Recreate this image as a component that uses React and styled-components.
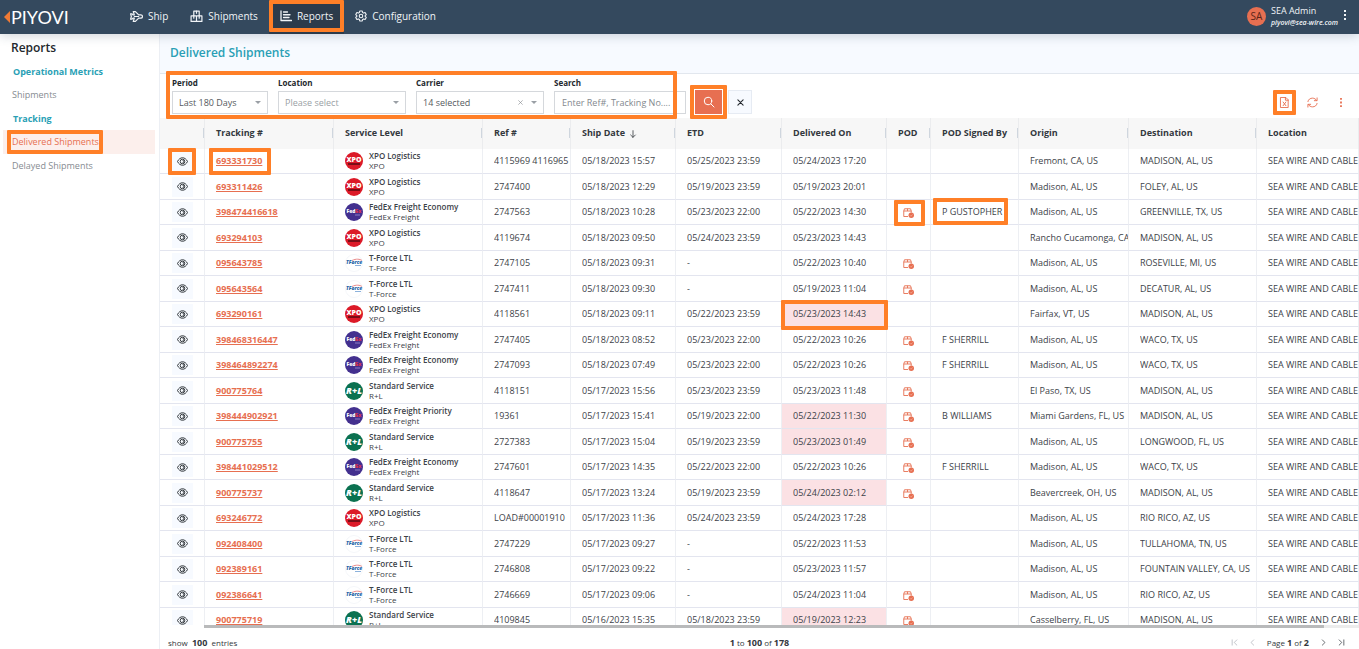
import React from "react";
import styled, { createGlobalStyle } from "styled-components";

const accent = "#e76f51";
const mark = "#ff7f27";
const teal = "#2a9fb5";

const Global = createGlobalStyle`
  * { box-sizing: border-box; }
  html, body, #root { height: 100%; }
  body {
    margin: 0;
    font-family: "Open Sans", "Noto Sans", sans-serif;
    font-size: 9px;
    color: #3c4248;
    background: #fff;
    overflow: hidden;
  }
  button, input, select { font: inherit; color: inherit; }
  button { border: 0; background: none; padding: 0; cursor: pointer; }
  a { color: inherit; text-decoration: none; }
  h1, h2, h3, p { margin: 0; }
`;

const Page = styled.div`
  height: 100vh;
  display: flex;
  flex-direction: column;
`;

/* Rectangle drawn over the part being pointed out */
const Mark = styled.span`
  position: absolute;
  z-index: 5;
  top: ${(p) => p.$t}px;
  right: ${(p) => p.$r}px;
  bottom: ${(p) => p.$b}px;
  left: ${(p) => p.$l}px;
  border: 4px solid ${mark};
  border-radius: 1px;
  pointer-events: none;
`;

const Header = styled.header`
  position: relative;
  z-index: 2;
  flex: none;
  height: 34px;
  display: flex;
  align-items: center;
  background: #34495e;
  color: #f1f4f7;
  box-shadow: 0 2px 10px rgba(52, 73, 94, 0.22);
`;

const Brand = styled.a`
  width: 119px;
  padding-left: 4px;
  display: flex;
  align-items: center;
  svg { display: block; }
`;

const BrandName = styled.span`
  font-family: Lato, sans-serif;
  font-size: 18px;
  line-height: 20px;
  color: #fff;
`;

const Nav = styled.nav`
  flex: 1;
  display: flex;
  height: 100%;
`;

const NavLink = styled.a`
  position: relative;
  display: flex;
  align-items: center;
  gap: 5px;
  padding: 0 11px 2px;
  font-size: 10px;
  background: ${(p) => (p.$active ? "#2c3b4b" : "transparent")};
  svg { flex: none; }
`;

const User = styled.div`
  display: flex;
  align-items: center;
  gap: 5px;
  padding: 0 12px 2px 0;
`;

const Avatar = styled.span`
  width: 19px;
  height: 19px;
  border-radius: 50%;
  display: grid;
  place-items: center;
  background: ${accent};
  color: #5a2418;
  font-size: 10px;
`;

const UserName = styled.span`
  display: block;
  font-size: 9px;
  line-height: 12px;
`;

const UserMail = styled.span`
  display: block;
  font-size: 7px;
  line-height: 11px;
  font-style: italic;
  font-weight: 600;
`;

const Body = styled.div`
  flex: 1;
  min-height: 0;
  display: flex;
`;

const Sidebar = styled.aside`
  width: 160px;
  flex: none;
  padding: 6px 4px 0 3px;
  border-right: 1px solid #eceff4;
`;

const SideTitle = styled.h1`
  font-size: 12px;
  line-height: 16px;
  font-weight: 600;
  color: #23282d;
  padding-left: 8px;
  margin-bottom: 4px;
`;

const SideHead = styled.h2`
  font-size: 9px;
  line-height: 23px;
  font-weight: 700;
  color: ${teal};
  padding-left: 10px;
`;

const SideLink = styled.a`
  position: relative;
  display: block;
  font-size: 9px;
  line-height: 24px;
  padding-left: 9px;
  color: ${(p) => (p.$active ? accent : "#868b91")};
  background: ${(p) => (p.$active ? "#fcefec" : "transparent")};
`;

const Main = styled.main`
  flex: 1;
  min-width: 0;
  display: flex;
  flex-direction: column;
`;

const TitleBar = styled.div`
  flex: none;
  height: 40px;
  padding: 8px 10px;
  background: #f7faff;
  border-bottom: 1px solid #e2e7ee;
`;

const Title = styled.h2`
  font-size: 12px;
  line-height: 22px;
  font-weight: 600;
  color: ${teal};
`;

const Toolbar = styled.div`
  flex: none;
  height: 44px;
  display: flex;
  align-items: flex-end;
  padding: 0 12px 4px;
`;

const Filters = styled.form`
  position: relative;
  display: flex;
  gap: 10px;
`;

const Field = styled.label`
  display: block;
  width: ${(p) => p.$w}px;
`;

const FieldLabel = styled.span`
  display: block;
  font-size: 8px;
  line-height: 16px;
  font-weight: 700;
  color: #23282d;
`;

const Box = styled.span`
  position: relative;
  display: flex;
  align-items: center;
  height: 23px;
  border: 1px solid #d5d8dc;
  background: #fff;
  color: ${(p) => (p.$muted ? "#9a9fa5" : "#555a60")};
`;

const Select = styled.select`
  appearance: none;
  flex: 1;
  min-width: 0;
  height: 100%;
  border: 0;
  outline: 0;
  background: transparent;
  font-size: 9px;
  padding: 0 6px;
`;

const Caret = styled.span`
  border: 3px solid transparent;
  border-top: 3px solid #9a9fa5;
  border-bottom: 0;
  margin: 0 6px;
`;

const Clear = styled.button`
  width: 10px;
  height: 10px;
  display: grid;
  place-items: center;
  color: #868b91;
`;

const Input = styled.input`
  flex: 1;
  min-width: 0;
  height: 100%;
  border: 0;
  outline: 0;
  background: transparent;
  font-size: 9px;
  padding: 0 7px;
  &::placeholder { color: #83888e; opacity: 1; }
`;

const SearchButton = styled.button`
  position: relative;
  width: 27px;
  height: 24px;
  margin-left: 9px;
  display: grid;
  place-items: center;
  color: #fff;
  background: ${accent};
`;

const ResetButton = styled.button`
  width: 24px;
  height: 24px;
  margin-left: 6px;
  display: grid;
  place-items: center;
  color: #23282d;
  background: #f7faff;
  border: 1px solid #e6ebf3;
`;

const Actions = styled.div`
  margin-left: auto;
  display: flex;
  gap: 15px;
  padding-bottom: 5px;
  color: ${accent};
`;

const IconButton = styled.button`
  position: relative;
  width: 13px;
  height: 13px;
  display: grid;
  place-items: center;
`;

const TableArea = styled.div`
  position: relative;
  flex: 1;
  min-height: 0;
  overflow: hidden;
`;

const Table = styled.table`
  width: 100%;
  table-layout: fixed;
  border-collapse: separate;
  border-spacing: 0;
`;

const Th = styled.th`
  position: relative;
  height: 31px;
  padding: 0 11px 2px;
  text-align: left;
  white-space: nowrap;
  font-size: 9px;
  font-weight: 700;
  color: #33383d;
  background: #f7f7f7;
  border-right: 1px solid #ebecee;
  svg { vertical-align: middle; margin-left: 4px; }
  &:not(:last-child)::after {
    content: "";
    position: absolute;
    right: 0;
    top: 10px;
    height: 10px;
    border-right: 1px solid #cfd6de;
  }
`;

const Td = styled.td`
  position: relative;
  padding: ${(p) => (p.$eye ? "0 12px" : "0 0 0 11px")};
  border-right: 1px solid #edeff3;
  border-bottom: 1px solid #e3e5ef;
  background: ${(p) => (p.$late ? "#fbe1e4" : "transparent")};
  line-height: 14px;
`;

const Tr = styled.tr`
  height: 25px;
  &:nth-child(even) { height: 26px; }
`;

const Clip = styled.span`
  display: block;
  overflow: hidden;
  white-space: nowrap;
`;

const EyeButton = styled.button`
  display: grid;
  place-items: center;
  width: 21px;
  height: 20px;
  color: #23282d;
  background: #f7faff;
`;

const TrackLink = styled.a`
  color: ${accent};
  font-weight: 700;
  text-decoration: underline;
`;

const Service = styled.div`
  display: flex;
  align-items: center;
  gap: 6px;
  height: 22px;
  svg { flex: none; }
`;

const ServiceText = styled.span`
  display: block;
  white-space: nowrap;
  font-size: 8px;
  line-height: 10px;
  b { display: block; font-weight: 600; }
`;

const PodIcon = styled.button`
  display: block;
  margin: 2px 0 0 5px;
  color: ${accent};
  svg { display: block; }
`;

const ScrollTrack = styled.div`
  flex: none;
  height: 3px;
  margin-left: 44px;
  background: #ececec;
`;

const ScrollThumb = styled.div`
  width: 97%;
  height: 3px;
  background: #b9babb;
`;

const Footer = styled.footer`
  flex: none;
  height: 21px;
  display: grid;
  grid-template-columns: 1fr auto 1fr;
  align-items: center;
  padding: 8px 8px 0;
  font-size: 8px;
  line-height: 11px;
  color: #33383d;
  b { font-size: 9px; }
`;

const Pager = styled.div`
  display: flex;
  align-items: center;
  justify-content: flex-end;
  gap: 10px;
  padding-right: 6px;
`;

const PageButton = styled.button`
  width: 8px;
  height: 9px;
  display: grid;
  place-items: center;
  color: ${(p) => (p.disabled ? "#a9aeb4" : "#4a4f55")};
`;

const Stroke = ({ size = 12, w = 1.6, children, box = 24 }) => (
  <svg width={size} height={size} viewBox={`0 0 ${box} ${box}`} fill="none" stroke="currentColor" strokeWidth={w} strokeLinecap="round" strokeLinejoin="round" aria-hidden="true">
    {children}
  </svg>
);

const ShipIcon = () => (
  <Stroke size={13} w={2.2}>
    <path d="M8 9 6 3h4l6 6h4c2 0 3 1.500 3 3s-1 3-3 3h-4l-6 6H6l2-6H5.500L3.500 17H1l1.500-5L1 7h2.500l2 2z" />
    <path d="M8 12h8" />
  </Stroke>
);
const BoxesIcon = () => (
  <Stroke size={13} w={2.2}>
    <path d="M7 2h10v9H7zM2 11h10v10H2zM12 11h10v10H12z" />
    <path d="M12 2v4M7 11v4M17 11v4" />
  </Stroke>
);
const ReportIcon = () => (
  <Stroke size={12} w={2.6}>
    <path d="M2 2v19h21M7 4h8M7 9.500h13M7 15h11" />
  </Stroke>
);
const GearIcon = () => (
  <Stroke size={12} w={2.2}>
    <path d="M9.500 2h5l.7 3 2 1.200 3-1 2.300 4-2.200 2v1.600l2.200 2-2.300 4-3-1-2 1.200-.7 3h-5l-.7-3-2-1.200-3 1-2.300-4 2.200-2v-1.600l-2.200-2 2.300-4 3 1 2-1.200z" />
    <circle cx="12" cy="12" r="3.500" />
  </Stroke>
);
const Dots = ({ h = 10 }) => (
  <svg width="4" height={h} viewBox="0 0 4 10" fill="currentColor" aria-hidden="true">
    <path d="M1 0h2v2H1zM1 4h2v2H1zM1 8h2v2H1z" />
  </svg>
);
const Eye = () => (
  <svg width="11" height="9" viewBox="0 0 22 18" fill="none" stroke="currentColor" strokeWidth="1.800" aria-hidden="true">
    <path d="M1 9c2.500-5 6-7.500 10-7.500S18.500 4 21 9c-2.500 5-6 7.500-10 7.500S3.500 14 1 9z" />
    <circle cx="11" cy="9" r="4.600" />
    <path d="M11 6.500a2.500 2.500 0 0 1 0 5" />
  </svg>
);
const Pod = () => (
  <svg width="11" height="10" viewBox="0 0 22 20" fill="none" stroke="currentColor" strokeWidth="1.800" aria-hidden="true">
    <path d="M10 17H1.500V6L3 1.500h12L16.500 6v3M1.500 6h15M9 1.500V6" />
    <circle cx="16.500" cy="14.500" r="5.500" fill="currentColor" stroke="none" />
    <path d="m14 14.500 2 2 3-3.500" stroke="#f3b5a5" strokeWidth="1.400" />
  </svg>
);
const Cross = ({ size = 8, w = 2 }) => (
  <Stroke size={size} w={w} box={16}><path d="m2 2 12 12M14 2 2 14" /></Stroke>
);

const logoText = { fontFamily: "Open Sans, sans-serif", fontWeight: 800, textAnchor: "middle" };

const CarrierLogo = ({ kind }) => (
  <svg width="18" height="18" viewBox="0 0 18 18" aria-hidden="true">
    {kind === "xpo" && (
      <>
        <circle cx="9" cy="9" r="9" fill="#dc1a28" />
        <text x="9" y="10" fontSize="7" fill="#fff" {...logoText}>XPO</text>
        <path d="M3 12h12" stroke="#7a0d16" strokeWidth="2" />
      </>
    )}
    {kind === "fedex" && (
      <>
        <circle cx="9" cy="9" r="9" fill="#43308f" />
        <text x="9" y="10" fontSize="5" {...logoText}>
          <tspan fill="#fff">Fed</tspan><tspan fill="#d6304f">Ex</tspan>
        </text>
        <path d="M10 12h5" stroke="#8d7dc4" strokeWidth="1" />
      </>
    )}
    {kind === "tforce" && (
      <>
        <circle cx="9" cy="9" r="8.500" fill="#fff" stroke="#f5f7fa" />
        <path d="M7 6.500c4-2 8-1.500 10 0" stroke="#e98a8a" strokeWidth="1" fill="none" />
        <text x="9" y="10" fontSize="5" fontStyle="italic" fill="#2465a8" {...logoText}>TForce</text>
        <path d="M10 11.500h6" stroke="#8cb2dc" strokeWidth="1" />
      </>
    )}
    {kind === "rl" && (
      <>
        <circle cx="9" cy="9" r="9" fill="#0b7150" />
        <text x="9" y="12" fontSize="9" fontStyle="italic" fill="#fff" {...logoText}>R+L</text>
      </>
    )}
  </svg>
);

const services = {
  xpo: ["xpo", "XPO Logistics", "XPO"],
  eco: ["fedex", "FedEx Freight Economy", "FedEx Freight"],
  pri: ["fedex", "FedEx Freight Priority", "FedEx Freight"],
  tf: ["tforce", "T-Force LTL", "T-Force"],
  rl: ["rl", "Standard Service", "R+L"],
};

/* tracking, service, ref, shipped, etd, delivered, late, pod, signed by, origin, destination */
const rows = [
  ["693331730", "xpo", "4115969 4116965 4", "05/18/2023 15:57", "05/25/2023 23:59", "05/24/2023 17:20", 0, 0, "", "Fremont, CA, US", "MADISON, AL, US"],
  ["693311426", "xpo", "2747400", "05/18/2023 12:29", "05/19/2023 23:59", "05/19/2023 20:01", 0, 0, "", "Madison, AL, US", "FOLEY, AL, US"],
  ["398474416618", "eco", "2747563", "05/18/2023 10:28", "05/23/2023 22:00", "05/22/2023 14:30", 0, 1, "P GUSTOPHER", "Madison, AL, US", "GREENVILLE, TX, US"],
  ["693294103", "xpo", "4119674", "05/18/2023 09:50", "05/24/2023 23:59", "05/23/2023 14:43", 0, 0, "", "Rancho Cucamonga, CA,", "MADISON, AL, US"],
  ["095643785", "tf", "2747105", "05/18/2023 09:31", "-", "05/22/2023 10:40", 0, 1, "", "Madison, AL, US", "ROSEVILLE, MI, US"],
  ["095643564", "tf", "2747411", "05/18/2023 09:30", "-", "05/19/2023 11:04", 0, 1, "", "Madison, AL, US", "DECATUR, AL, US"],
  ["693290161", "xpo", "4118561", "05/18/2023 09:11", "05/22/2023 23:59", "05/23/2023 14:43", 1, 0, "", "Fairfax, VT, US", "MADISON, AL, US"],
  ["398468316447", "eco", "2747405", "05/18/2023 08:52", "05/23/2023 22:00", "05/22/2023 10:26", 0, 1, "F SHERRILL", "Madison, AL, US", "WACO, TX, US"],
  ["398464892274", "eco", "2747093", "05/18/2023 07:49", "05/23/2023 22:00", "05/22/2023 10:26", 0, 1, "F SHERRILL", "Madison, AL, US", "WACO, TX, US"],
  ["900775764", "rl", "4118151", "05/17/2023 15:56", "05/23/2023 23:59", "05/23/2023 11:48", 0, 1, "", "El Paso, TX, US", "MADISON, AL, US"],
  ["398444902921", "pri", "19361", "05/17/2023 15:41", "05/19/2023 22:00", "05/22/2023 11:30", 1, 1, "B WILLIAMS", "Miami Gardens, FL, US", "MADISON, AL, US"],
  ["900775755", "rl", "2727383", "05/17/2023 15:04", "05/19/2023 23:59", "05/23/2023 01:49", 1, 1, "", "Madison, AL, US", "LONGWOOD, FL, US"],
  ["398441029512", "eco", "2747601", "05/17/2023 14:35", "05/22/2023 22:00", "05/22/2023 10:26", 0, 1, "F SHERRILL", "Madison, AL, US", "WACO, TX, US"],
  ["900775737", "rl", "4118647", "05/17/2023 13:24", "05/19/2023 23:59", "05/24/2023 02:12", 1, 1, "", "Beavercreek, OH, US", "MADISON, AL, US"],
  ["693246772", "xpo", "LOAD#00001910", "05/17/2023 11:36", "05/24/2023 23:59", "05/24/2023 17:28", 0, 0, "", "Madison, AL, US", "RIO RICO, AZ, US"],
  ["092408400", "tf", "2747229", "05/17/2023 09:27", "-", "05/22/2023 11:53", 0, 0, "", "Madison, AL, US", "TULLAHOMA, TN, US"],
  ["092389161", "tf", "2746808", "05/17/2023 09:22", "-", "05/23/2023 11:57", 0, 0, "", "Madison, AL, US", "FOUNTAIN VALLEY, CA, US"],
  ["092386641", "tf", "2746669", "05/17/2023 09:06", "-", "05/24/2023 11:04", 0, 1, "", "Madison, AL, US", "RIO RICO, AZ, US"],
  ["900775719", "rl", "4109845", "05/16/2023 15:35", "05/18/2023 23:59", "05/19/2023 12:23", 1, 1, "", "Casselberry, FL, US", "MADISON, AL, US"],
];

const columns = [
  ["", 45], ["Tracking #", 129], ["Service Level", 149], ["Ref #", 88], ["Ship Date", 105], ["ETD", 106],
  ["Delivered On", 105], ["POD", 44], ["POD Signed By", 88], ["Origin", 110], ["Destination", 128], ["Location"],
];

function Row({ data, index }) {
  const [tracking, service, ref, shipped, etd, delivered, late, pod, signed, origin, destination] = data;
  const [kind, name, carrier] = services[service];
  return (
    <Tr>
      <Td $eye>
        <EyeButton aria-label={`View ${tracking}`}><Eye /></EyeButton>
        {index === 0 && <Mark $t={-1} $r={8} $b={-2} $l={8} />}
      </Td>
      <Td>
        <TrackLink href="#">{tracking}</TrackLink>
        {index === 0 && <Mark $t={-1} $r={62} $b={-2} $l={4} />}
      </Td>
      <Td>
        <Service>
          <CarrierLogo kind={kind} />
          <ServiceText><b>{name}</b>{carrier}</ServiceText>
        </Service>
      </Td>
      <Td><Clip>{ref}</Clip></Td>
      <Td><Clip>{shipped}</Clip></Td>
      <Td><Clip>{etd}</Clip></Td>
      <Td $late={late}>
        <Clip>{delivered}</Clip>
        {index === 6 && <Mark $t={-2} $r={-2} $b={-4} $l={-1} />}
      </Td>
      <Td>
        {pod ? <PodIcon aria-label="Proof of delivery"><Pod /></PodIcon> : null}
        {index === 2 && <Mark $t={0} $r={5} $b={-2} $l={7} />}
      </Td>
      <Td>
        <Clip>{signed}</Clip>
        {index === 2 && <Mark $t={-2} $r={10} $b={-1} $l={2} />}
      </Td>
      <Td><Clip>{origin}</Clip></Td>
      <Td><Clip>{destination}</Clip></Td>
      <Td><Clip>SEA WIRE AND CABLE</Clip></Td>
    </Tr>
  );
}

export default function App() {
  return (
    <Page>
      <Global />
      <Header>
        <Brand href="#">
          <svg width="7" height="12" viewBox="0 0 7 12" aria-hidden="true"><path d="M6 0v12L0 6z" fill="#f07a35" /></svg>
          <BrandName>PIYOVI</BrandName>
        </Brand>
        <Nav>
          <NavLink href="#"><ShipIcon />Ship</NavLink>
          <NavLink href="#"><BoxesIcon />Shipments</NavLink>
          <NavLink href="#" $active><ReportIcon />Reports<Mark $t={0} $r={0} $b={2} $l={0} /></NavLink>
          <NavLink href="#"><GearIcon />Configuration</NavLink>
        </Nav>
        <User>
          <Avatar>SA</Avatar>
          <div>
            <UserName>SEA Admin</UserName>
            <UserMail>piyovi@sea-wire.com</UserMail>
          </div>
          <button aria-label="Account menu"><Dots /></button>
        </User>
      </Header>
      <Body>
        <Sidebar>
          <SideTitle>Reports</SideTitle>
          <SideHead>Operational Metrics</SideHead>
          <SideLink href="#">Shipments</SideLink>
          <SideHead>Tracking</SideHead>
          <SideLink href="#" $active>Delivered Shipments<Mark $t={0} $r={52} $b={0} $l={4} /></SideLink>
          <SideLink href="#">Delayed Shipments</SideLink>
        </Sidebar>
        <Main>
          <TitleBar><Title>Delivered Shipments</Title></TitleBar>
          <Toolbar>
            <Filters>
              <Field $w={96}>
                <FieldLabel>Period</FieldLabel>
                <Box>
                  <Select><option>Last 180 Days</option></Select>
                  <Caret />
                </Box>
              </Field>
              <Field $w={128}>
                <FieldLabel>Location</FieldLabel>
                <Box $muted>
                  <Select><option>Please select</option></Select>
                  <Caret />
                </Box>
              </Field>
              <Field $w={128}>
                <FieldLabel>Carrier</FieldLabel>
                <Box>
                  <Select><option>14 selected</option></Select>
                  <Clear type="button" aria-label="Clear carriers"><Cross size={5} w={2} /></Clear>
                  <Caret />
                </Box>
              </Field>
              <Field $w={132}>
                <FieldLabel>Search</FieldLabel>
                <Box><Input placeholder="Enter Ref#, Tracking No...." /></Box>
              </Field>
              <Mark $t={-4} $r={9} $b={-5} $l={-6} />
            </Filters>
            <SearchButton aria-label="Search">
              <Stroke size={12} w={2}><circle cx="10" cy="10" r="7.500" /><path d="m16 16 6 6" /></Stroke>
              <Mark $t={-5} $r={-5} $b={-5} $l={-5} />
            </SearchButton>
            <ResetButton aria-label="Reset"><Cross size={7} w={2.4} /></ResetButton>
            <Actions>
              <IconButton aria-label="Export to Excel">
                <Stroke size={11} w={2}><path d="M4 1h11l5 5v17H4zM14 1v6h6M9 11l6 8M15 11l-6 8" /></Stroke>
                <Mark $t={-6} $r={-5} $b={-6} $l={-5} />
              </IconButton>
              <IconButton aria-label="Refresh">
                <Stroke size={11} w={2}><path d="M2 10c1-5 5-7.500 10-7.500 4 0 7 2 9 5M22 2v6h-6M22 14c-1 5-5 7.500-10 7.500-4 0-7-2-9-5M2 22v-6h6" /></Stroke>
              </IconButton>
              <IconButton aria-label="More"><Dots h={9} /></IconButton>
            </Actions>
          </Toolbar>
          <TableArea>
            <Table>
              <colgroup>
                {columns.map(([name, w]) => <col key={name} width={w} />)}
              </colgroup>
              <thead>
                <tr>
                  {columns.map(([name]) => (
                    <Th key={name} scope="col">
                      {name}
                      {name === "Ship Date" && (
                        <Stroke size={8} w={2.4}><path d="M12 2v20M5 15l7 7 7-7" /></Stroke>
                      )}
                    </Th>
                  ))}
                </tr>
              </thead>
              <tbody>
                {rows.map((r, i) => <Row key={r[0]} data={r} index={i} />)}
              </tbody>
            </Table>
          </TableArea>
          <ScrollTrack><ScrollThumb /></ScrollTrack>
          <Footer>
            <span>show &nbsp;<b>100</b>&nbsp; entries</span>
            <span><b>1</b> to <b>100</b> of <b>178</b></span>
            <Pager>
              <PageButton disabled aria-label="First page"><Stroke size={7} w={2.4}><path d="M4 3v18M20 3l-9 9 9 9" /></Stroke></PageButton>
              <PageButton disabled aria-label="Previous page"><Stroke size={7} w={2.4}><path d="m16 3-9 9 9 9" /></Stroke></PageButton>
              <span>Page <b>1</b> of <b>2</b></span>
              <PageButton aria-label="Next page"><Stroke size={7} w={2.8}><path d="m8 3 9 9-9 9" /></Stroke></PageButton>
              <PageButton aria-label="Last page"><Stroke size={7} w={2.8}><path d="M20 3v18M4 3l9 9-9 9" /></Stroke></PageButton>
            </Pager>
          </Footer>
        </Main>
      </Body>
    </Page>
  );
}
